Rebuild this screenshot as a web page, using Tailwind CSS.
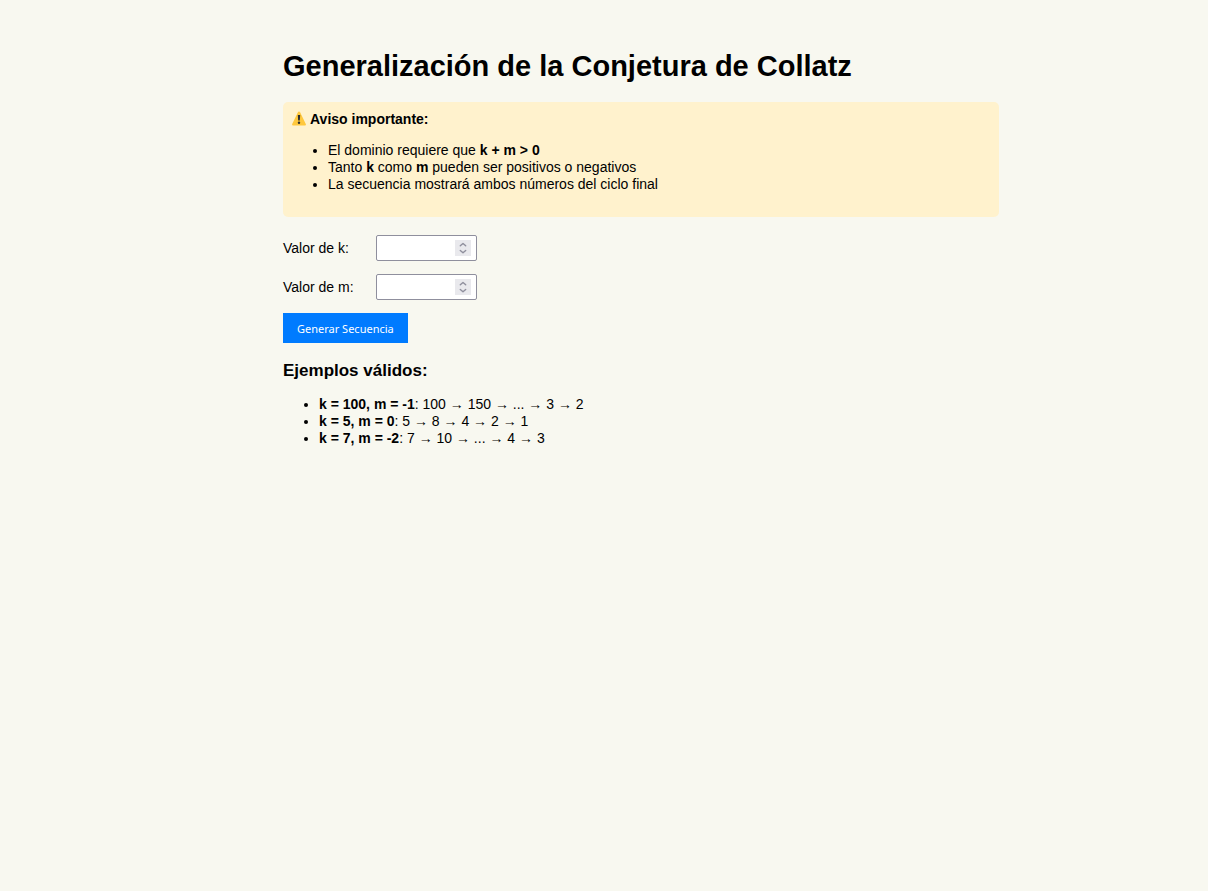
<!DOCTYPE html>
<html lang="es">
<head>
    <meta charset="UTF-8">
    <meta name="viewport" content="width=device-width, initial-scale=1.0">
    <title>Generalización de la Conjetura de Collatz</title>
    <script src="https://cdn.jsdelivr.net/npm/@tailwindcss/browser@4"></script>
</head>
<body class="bg-[#f8f8f0] min-h-screen text-black text-[14px] leading-[17px] font-['Liberation_Sans',Arial,sans-serif]">
    <main class="max-w-[790px] mx-auto pl-[74px] pt-[50px] pb-8">
        <h1 class="text-[29px] leading-[32px] font-bold mb-5">Generalización de la Conjetura de Collatz</h1>

        <!-- Aviso -->
        <div class="bg-[#fff2cd] rounded-[5px] pt-[9px] px-[9px] pb-6 mb-[18px]">
            <p class="flex items-start gap-1 font-bold">
                <svg class="w-[14px] h-4" viewBox="0 0 14 16" aria-hidden="true">
                    <path d="M7 .6c.5 0 .8.2 1.100.7l5.700 11.700c.4.8 0 1.500-.8 1.500H1c-.8 0-1.200-.7-.8-1.500L5.900 1.300c.3-.5.6-.7 1.100-.7z" fill="#ffc83d"/>
                    <path d="M5.800 4h2.400l-.4 5.600H6.200z" fill="#2b2f33"/>
                    <circle cx="7" cy="11.800" r="1.200" fill="#2b2f33"/>
                </svg>
                Aviso importante:
            </p>
            <ul class="list-disc pl-9 mt-[14px]">
                <li>El dominio requiere que <strong>k + m &gt; 0</strong></li>
                <li>Tanto <strong>k</strong> como <strong>m</strong> pueden ser positivos o negativos</li>
                <li>La secuencia mostrará ambos números del ciclo final</li>
            </ul>
        </div>

        <!-- Formulario -->
        <form id="collatz-form" class="flex flex-col items-start gap-[13px]">
            <div class="flex items-center">
                <label for="k" class="w-[93px]">Valor de k:</label>
                <div class="relative">
                    <input type="number" id="k" name="k" required class="block w-[101px] h-[26px] pl-1 pr-6 bg-white border border-[#8f8f9d] rounded-[2px] [appearance:textfield]">
                    <svg class="absolute right-[6px] top-[5px] w-4 h-4 bg-[#e9e9ed] pointer-events-none" viewBox="0 0 16 16" fill="none" stroke="#8f8f9d" stroke-width="1.4" stroke-linecap="round" stroke-linejoin="round" aria-hidden="true">
                        <path d="M5.300 5.800L8 3.400l2.700 2.400M5.300 10.400L8 12.800l2.700-2.400"/>
                    </svg>
                </div>
            </div>
            <div class="flex items-center">
                <label for="m" class="w-[93px]">Valor de m:</label>
                <div class="relative">
                    <input type="number" id="m" name="m" required class="block w-[101px] h-[26px] pl-1 pr-6 bg-white border border-[#8f8f9d] rounded-[2px] [appearance:textfield]">
                    <svg class="absolute right-[6px] top-[5px] w-4 h-4 bg-[#e9e9ed] pointer-events-none" viewBox="0 0 16 16" fill="none" stroke="#8f8f9d" stroke-width="1.4" stroke-linecap="round" stroke-linejoin="round" aria-hidden="true">
                        <path d="M5.300 5.800L8 3.400l2.700 2.400M5.300 10.400L8 12.800l2.700-2.400"/>
                    </svg>
                </div>
            </div>
            <button type="submit" class="px-[14px] pt-2 pb-[6px] bg-[#007bff] text-white text-[11px] leading-[16px] font-['Noto_Sans',sans-serif] cursor-pointer">Generar Secuencia</button>
        </form>

        <div id="resultado"></div>

        <h3 class="text-[17px] leading-[20px] font-bold mt-[18px]">Ejemplos válidos:</h3>
        <ul class="list-disc pl-9 mt-[15px]">
            <li><strong>k = 100, m = -1</strong>: 100 → 150 → ... → 3 → 2</li>
            <li><strong>k = 5, m = 0</strong>: 5 → 8 → 4 → 2 → 1</li>
            <li><strong>k = 7, m = -2</strong>: 7 → 10 → ... → 4 → 3</li>
        </ul>
    </main>
</body>
</html>
